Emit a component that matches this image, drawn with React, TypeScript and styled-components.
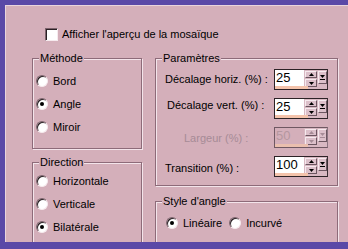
// boîte de dialogue "Mosaïque" (options de pavage)

import styled, { createGlobalStyle } from 'styled-components';

const GlobalStyle = createGlobalStyle`
  html, body { margin:0; padding:0; background:#5a49a7; }
  body {
    font-family:"Liberation Sans", Arial, sans-serif;
    font-size:11px;
    color:#000;
  }
`;

// Cadre
const Frame = styled.div`
  width:348px;
  height:249px;
  box-sizing:border-box;
  padding:5px 0 7px 5px;
  background:#5a49a7;
`;

const Panel = styled.div`
  height:100%;
  box-sizing:border-box;
  background:#d4afba;
  border-top:1px solid #e9d5dc;
  border-left:1px solid #e9d5dc;
  overflow:hidden;
  padding:21px 0 0 26px;
`;

const CheckRow = styled.label`
  display:flex;
  align-items:center;
  gap:4px;
  height:14px;
  margin-left:13px;
`;

const CheckBox = styled.span`
  width:13px;
  height:13px;
  box-sizing:border-box;
  background:#fff;
  border:1px solid;
  border-color:#7c636c #f6eaee #f6eaee #7c636c;
  box-shadow:inset 1px 1px 0 #2a2024;
`;

const Columns = styled.div`
  display:flex;
  gap:13px;
  margin-top:17px;
`;

const Column = styled.div<{ $w: number; $gap: number }>`
  width:${p => p.$w}px;
  display:flex;
  flex-direction:column;
  gap:${p => p.$gap}px;
  flex-shrink:0;
`;

// Groupe avec bordure gravée
const Group = styled.div<{ $h: number }>`
  position:relative;
  height:${p => p.$h}px;
  box-sizing:border-box;
  border:1px solid #8d6b79;
  box-shadow:inset 1px 1px 0 #f3e4ea, 1px 1px 0 #f3e4ea;
`;

const Caption = styled.span`
  position:absolute;
  top:-8px;
  left:6px;
  padding:0 1px;
  line-height:14px;
  background:#d4afba;
`;

const RadioList = styled.div<{ $pt: number; $pl: number; $row?: boolean }>`
  display:flex;
  flex-direction:${p => (p.$row ? 'row' : 'column')};
  gap:${p => (p.$row ? 7 : 0)}px;
  padding:${p => p.$pt}px 0 0 ${p => p.$pl}px;
`;

const RadioItem = styled.label`
  display:flex;
  align-items:center;
  gap:5px;
  height:23px;
`;

const RadioDot = styled.span<{ $on?: boolean }>`
  width:12px;
  height:12px;
  box-sizing:border-box;
  border-radius:50%;
  background:#fff;
  border:1px solid;
  border-color:#7c636c #f6eaee #f6eaee #7c636c;
  box-shadow:inset 1px 1px 0 #2a2024;
  display:flex;
  align-items:center;
  justify-content:center;
  &::after {
    content:'';
    width:4px;
    height:4px;
    border-radius:50%;
    background:${p => (p.$on ? '#000' : 'transparent')};
  }
`;

// Paramètres
const Params = styled.div`
  display:flex;
  flex-direction:column;
  gap:8px;
  padding:10px 9px 0 9px;
`;

const ParamRow = styled.div`
  display:flex;
  align-items:center;
  justify-content:space-between;
  height:21px;
`;

const ParamLabel = styled.span<{ $indent: number; $raise: number; $off?: boolean }>`
  padding-left:${p => p.$indent}px;
  margin-bottom:${p => p.$raise * 2}px;
  color:${p => (p.$off ? '#a68b96' : '#000')};
`;

const Spin = styled.div<{ $off?: boolean }>`
  width:54px;
  height:21px;
  box-sizing:border-box;
  display:flex;
  border:1px solid ${p => (p.$off ? '#6f5862' : '#2c2226')};
  border-right-color:${p => (p.$off ? '#8b7480' : '#3a2e33')};
  background:#d8b8c2;
`;

const Field = styled.div<{ $off?: boolean }>`
  flex:1;
  position:relative;
  background:${p => (p.$off ? '#d4afba' : '#fff')};
  color:${p => (p.$off ? '#b5979f' : '#000')};
  font-size:13px;
  line-height:15px;
  padding-left:1px;
  &::after {
    content:'';
    position:absolute;
    left:0;
    right:-4px;
    bottom:0;
    height:3px;
    background:${p => (p.$off ? '#eabfae' : '#f4c3ab')};
  }
`;

const Controls = styled.div`
  width:23px;
  display:flex;
  align-items:flex-start;
  gap:1px;
  padding:1px 0 0 1px;
  box-sizing:border-box;
`;

const Stack = styled.div`
  display:flex;
  flex-direction:column;
  gap:1px;
`;

const Btn = styled.div<{ $w: number; $h: number }>`
  width:${p => p.$w}px;
  height:${p => p.$h}px;
  box-sizing:border-box;
  background:#dcc0ca;
  border:1px solid;
  border-color:#f6eaee #6c5660 #6c5660 #f6eaee;
  display:flex;
  align-items:center;
  justify-content:center;
`;

const Arrow = ({ dir, off }: { dir: 'up' | 'down' | 'end'; off?: boolean }) => {
  const c = off ? '#a68b96' : '#000';
  if (dir === 'end') {
    return (
      <svg width="5" height="6" viewBox="0 0 5 6">
        <path d="M0 0h5L2.5 3z" fill={c} />
        <rect x="0" y="4" width="5" height="1" fill={c} />
      </svg>
    );
  }
  return (
    <svg width="5" height="3" viewBox="0 0 5 3">
      <path d={dir === 'up' ? 'M2.5 0L5 3H0z' : 'M0 0h5L2.5 3z'} fill={c} />
    </svg>
  );
};

const SpinBox = ({ value, off }: { value: string; off?: boolean }) => (
  <Spin $off={off}>
    <Field $off={off}>{value}</Field>
    <Controls>
      <Stack>
        <Btn $w={12} $h={7}><Arrow dir="up" off={off} /></Btn>
        <Btn $w={12} $h={8}><Arrow dir="down" off={off} /></Btn>
      </Stack>
      <Btn $w={9} $h={13}><Arrow dir="end" off={off} /></Btn>
    </Controls>
  </Spin>
);

const Radio = ({ label, on }: { label: string; on?: boolean }) => (
  <RadioItem>
    <RadioDot $on={on} />
    {label}
  </RadioItem>
);

const params = [
  { label: 'Décalage horiz. (%) :', value: '25', indent: 0, raise: 1 },
  { label: 'Décalage vert. (%) :', value: '25', indent: 2, raise: 4 },
  { label: 'Largeur (%) :', value: '50', indent: 19, raise: 0, off: true },
  { label: 'Transition (%) :', value: '100', indent: 0, raise: -1 },
];

export default function App() {
  return (
    <>
      <GlobalStyle />
      <Frame>
        <Panel>
          <CheckRow>
            <CheckBox />
            Afficher l'aperçu de la mosaïque
          </CheckRow>
          <Columns>
            <Column $w={110} $gap={13}>
              <Group $h={91}>
                <Caption>Méthode</Caption>
                <RadioList $pt={10} $pl={3}>
                  <Radio label="Bord" />
                  <Radio label="Angle" on />
                  <Radio label="Miroir" />
                </RadioList>
              </Group>
              <Group $h={100}>
                <Caption>Direction</Caption>
                <RadioList $pt={6} $pl={3}>
                  <Radio label="Horizontale" />
                  <Radio label="Verticale" />
                  <Radio label="Bilatérale" on />
                </RadioList>
              </Group>
            </Column>
            <Column $w={183} $gap={15}>
              <Group $h={128}>
                <Caption>Paramètres</Caption>
                <Params>
                  {params.map(p => (
                    <ParamRow key={p.label}>
                      <ParamLabel $indent={p.indent} $raise={p.raise} $off={p.off}>
                        {p.label}
                      </ParamLabel>
                      <SpinBox value={p.value} off={p.off} />
                    </ParamRow>
                  ))}
                </Params>
              </Group>
              <Group $h={60}>
                <Caption>Style d'angle</Caption>
                <RadioList $pt={9} $pl={10} $row>
                  <Radio label="Linéaire" on />
                  <Radio label="Incurvé" />
                </RadioList>
              </Group>
            </Column>
          </Columns>
        </Panel>
      </Frame>
    </>
  );
}
